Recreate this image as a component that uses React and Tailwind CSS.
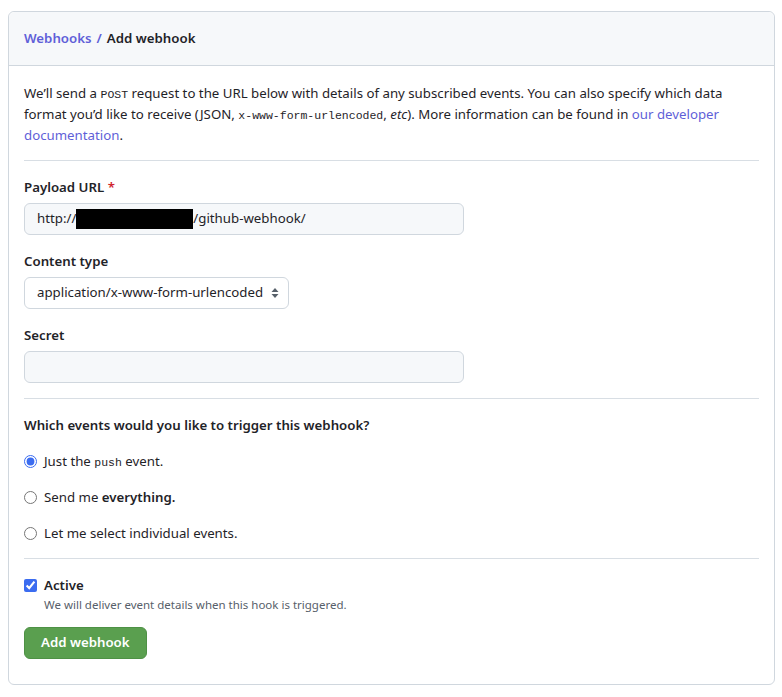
export default function App() {
  const font = { fontFamily: '"Segoe UI", "Noto Sans", sans-serif' };
  const mono = "font-['Liberation_Mono',monospace] text-[11.5px] leading-none";

  return (
    <div className="min-h-screen bg-white pt-[11px] px-2 text-[#1f2328] text-[13.25px]" style={font}>
      <div className="w-[767px] border border-[#d0d7de] rounded-md">
        <div className="h-[54px] bg-[#f6f8fa] border-b border-[#d0d7de] rounded-t-md px-[15px] flex items-center font-semibold">
          <span className="text-[#5f5fd8]">Webhooks</span>
          <span className="text-[#5f5fd8] mx-[5px]">/</span>
          <span>Add webhook</span>
        </div>

        <div className="px-[15px]">
          <p className="pt-[17px] pb-[14px] leading-[21px] border-b border-[#d8dee4]">
            We’ll send a <code className={mono}>POST</code> request to the URL below with details of any subscribed
            events. You can also specify which data format you’d like to receive (JSON,{" "}
            <code className={mono}>x-www-form-urlencoded</code>, <em>etc</em>). More information can be found in{" "}
            <a className="text-[#5f5fd8]">our developer documentation</a>.
          </p>

          <div className="pt-[16px] pb-[15px] border-b border-[#d8dee4]">
            <label className="block font-semibold leading-[21px]">
              Payload URL <span className="text-[#cf222e]">*</span>
            </label>
            <div className="mt-[5px] w-[440px] h-8 rounded-md border border-[#d0d7de] bg-[#f6f8fa] px-3 flex items-center">
              <span>http://</span>
              <span className="inline-block w-[117px] h-[20px] bg-black"></span>
              <span>/github-webhook/</span>
            </div>

            <label className="block font-semibold leading-[21px] mt-[16px]">Content type</label>
            <div className="mt-[5px] inline-flex items-center h-8 rounded-md border border-[#d0d7de] bg-white pl-3 pr-[9px] gap-[8px]">
              <span>application/x-www-form-urlencoded</span>
              <svg width="8" height="12" viewBox="0 0 8 12">
                <path d="M4 1 L7.5 5 H0.5 Z" fill="#57606a" />
                <path d="M4 11 L7.5 7 H0.5 Z" fill="#57606a" />
              </svg>
            </div>

            <label className="block font-semibold leading-[21px] mt-[16px]">Secret</label>
            <div className="mt-[5px] w-[440px] h-8 rounded-md border border-[#d0d7de] bg-[#f6f8fa]"></div>
          </div>

          <div className="pt-[16px] pb-[14px] border-b border-[#d8dee4]">
            <div className="font-semibold leading-[21px]">Which events would you like to trigger this webhook?</div>
            <div className="mt-[15px] flex flex-col gap-[15px]">
              <label className="flex items-center gap-[7px] leading-[21px]">
                <input type="radio" name="ev" defaultChecked className="m-0 w-[13px] h-[13px] accent-[#3b6cf0]" />
                <span>
                  Just the <code className={mono}>push</code> event.
                </span>
              </label>
              <label className="flex items-center gap-[7px] leading-[21px]">
                <input type="radio" name="ev" className="m-0 w-[13px] h-[13px] accent-[#3b6cf0]" />
                <span>
                  Send me <strong className="font-semibold">everything.</strong>
                </span>
              </label>
              <label className="flex items-center gap-[7px] leading-[21px]">
                <input type="radio" name="ev" className="m-0 w-[13px] h-[13px] accent-[#3b6cf0]" />
                <span>Let me select individual events.</span>
              </label>
            </div>
          </div>

          <div className="pt-[16px] pb-[25px]">
            <label className="flex items-center gap-[7px] leading-[21px] font-semibold">
              <input type="checkbox" defaultChecked className="m-0 w-[13px] h-[13px] accent-[#3b6cf0]" />
              <span>Active</span>
            </label>
            <div className="pl-5 text-[11.5px] leading-[18px] text-[#57606a]">
              We will deliver event details when this hook is triggered.
            </div>
            <button className="mt-[13px] h-8 px-4 rounded-md bg-[#5a9f4f] border border-[#4e9145] text-white font-semibold">
              Add webhook
            </button>
          </div>
        </div>
      </div>
    </div>
  );
}
